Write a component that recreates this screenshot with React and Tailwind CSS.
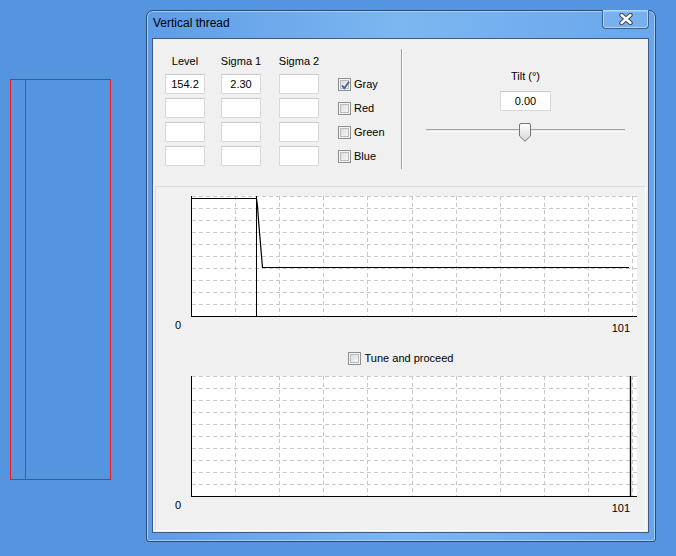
import React from "react";

const font = { fontFamily: '"Liberation Sans", Arial, sans-serif' };

const Edit = ({ value, className = "" }) => (
  <div
    className={`h-[20px] bg-white border border-[#d9d9d9] border-t-[#c9c9c9] flex items-center justify-center text-[11px] leading-none text-black ${className}`}
  >
    {value}
  </div>
);

const CheckBox = ({ checked }) => (
  <div className="w-[13px] h-[13px] border border-[#8e8f8f] bg-[#f4f4f4] p-[1px] shrink-0">
    <div className="relative w-full h-full border border-[#b9bcc0] bg-gradient-to-br from-[#dcdcdc] to-[#f6f6f6]">
      {checked && (
        <svg className="absolute -left-[1px] -top-[1px]" width="11" height="11" viewBox="0 0 11 11">
          <path d="M2 5.5 L4.3 8.2 L9 1.8" fill="none" stroke="#4a5f9c" strokeWidth="1.8" />
        </svg>
      )}
    </div>
  </div>
);

const CheckRow = ({ label, checked }) => (
  <div className="h-[20px] mb-[4px] flex items-center pt-[1px] gap-[3px] text-[11px] text-black">
    <CheckBox checked={checked} />
    <span>{label}</span>
  </div>
);

const Column = ({ label, values, className = "" }) => (
  <div className={`w-[40px] flex flex-col ${className}`}>
    <div className="h-[19px] flex justify-center text-[11px] leading-[13px] whitespace-nowrap text-black">
      {label}
    </div>
    {values.map((v, i) => (
      <Edit key={i} value={v} className="mb-[4px]" />
    ))}
  </div>
);

const Plot = ({ children }) => {
  const vx = Array.from({ length: 10 }, (_, k) => Math.round(44.1 * (k + 1)) + 0.5);
  const hy = Array.from({ length: 10 }, (_, k) => k * 12 + 0.5);
  return (
    <svg width="446" height="121" viewBox="0 0 446 121" className="block">
      <rect x="0" y="0" width="446" height="121" fill="#ffffff" />
      {hy.map((y) => (
        <line key={"h" + y} x1="1" y1={y} x2="446" y2={y} stroke="#c8c8c8" strokeWidth="1" strokeDasharray="4 3" />
      ))}
      {vx.map((x) => (
        <line key={"v" + x} x1={x} y1="0" x2={x} y2="120" stroke="#c8c8c8" strokeWidth="1" strokeDasharray="4 3" />
      ))}
      <line x1="0.5" y1="0" x2="0.5" y2="121" stroke="#000" strokeWidth="1" />
      <line x1="0" y1="120.5" x2="446" y2="120.5" stroke="#000" strokeWidth="1" />
      {children}
    </svg>
  );
};

const AxisLabels = () => (
  <div className="mt-[2px] h-[16px] flex justify-between pl-[19px] pr-[15px] text-[11px] leading-[13px] text-black">
    <span>0</span>
    <span className="pt-[3px]">101</span>
  </div>
);

const Slider = () => (
  <div className="mt-[12px] w-[199px] h-[19px] relative">
    <div className="absolute left-0 right-0 top-[6px] h-[3px] border-t border-[#a7a7a7] border-b border-b-white bg-[#e4e4e4]" />
    <svg className="absolute left-[93px] top-0" width="12" height="19" viewBox="0 0 12 19">
      <defs>
        <linearGradient id="thumb" x1="0" y1="0" x2="0" y2="1">
          <stop offset="0" stopColor="#ffffff" />
          <stop offset="1" stopColor="#d6d6d6" />
        </linearGradient>
      </defs>
      <path d="M2 0.5 H10 Q11.5 0.5 11.5 2 V13 L6 18.3 L0.5 13 V2 Q0.5 0.5 2 0.5 Z" fill="url(#thumb)" stroke="#767676" strokeWidth="1" />
    </svg>
  </div>
);

const CloseGlyph = () => (
  <svg width="16" height="12" viewBox="0 0 16 12">
    <path d="M3.5 2 L12.5 10 M12.5 2 L3.5 10" stroke="#3b4656" strokeWidth="4.4" strokeLinecap="round" />
    <path d="M3.5 2 L12.5 10 M12.5 2 L3.5 10" stroke="#ffffff" strokeWidth="2.4" strokeLinecap="round" />
  </svg>
);

export default function App() {
  return (
    <div className="relative w-[676px] h-[556px] overflow-hidden bg-[#5494e0]" style={font}>
      {/* red rectangle on the desktop */}
      <div className="absolute left-[10px] top-[79px] w-[101px] h-[401px] border border-[#f01818] flex">
        <div className="w-[15px] h-full border-r border-[#c8283c]" />
      </div>

      {/* window */}
      <div className="absolute left-[146px] top-[10px] w-[510px] h-[532px] border border-[#2e4b72] rounded-t-[7px] rounded-b-[3px] bg-gradient-to-r from-[#5f9ce6] via-[#7cb7f1] to-[#69a6ec] shadow-[inset_0_0_0_1px_#a6cdf6] flex flex-col">
        <div className="h-[27px] flex shrink-0">
          <div className="pl-[6px] pt-[5px] text-[12px] leading-[15px] text-black">Vertical thread</div>
          <div className="ml-auto mr-[6px] -mt-[1px] w-[47px] h-[19px] border border-[#3f5f88] border-t-0 rounded-b-[4px] bg-[#8dbef2]/40 shadow-[inset_0_0_0_1px_#b2d4f7] flex items-center justify-center">
            <CloseGlyph />
          </div>
        </div>

        {/* client area */}
        <div className="ml-[5px] w-[497px] h-[495px] border border-[#3f5a7e] bg-[#f0f0f0] flex flex-col">
          {/* controls */}
          <div className="h-[147px] flex shrink-0">
            <div className="w-[248px] pl-[12px] pt-[16px] flex">
              <Column label="Level" values={["154.2", "", "", ""]} />
              <Column label="Sigma 1" values={["2.30", "", "", ""]} className="ml-[16px]" />
              <Column label="Sigma 2" values={["", "", "", ""]} className="ml-[18px]" />
              <div className="ml-[19px] pt-[19px] flex flex-col">
                <CheckRow label="Gray" checked />
                <CheckRow label="Red" />
                <CheckRow label="Green" />
                <CheckRow label="Blue" />
              </div>
            </div>
            <div className="mt-[10px] h-[120px] w-[2px] border-l border-[#a0a0a0] border-r border-r-white" />
            <div className="flex-1 flex flex-col items-center pt-[31px]">
              <div className="h-[13px] text-[11px] leading-[13px] text-black">Tilt (°)</div>
              <Edit value="0.00" className="mt-[8px] w-[51px]" />
              <Slider />
            </div>
          </div>

          {/* charts panel */}
          <div className="mx-[2px] h-[345px] border border-[#d8dde3] border-r-white border-b-white flex flex-col">
            <div className="mt-[9px] ml-[35px]">
              <Plot>
                <polyline
                  points="0,2.5 65.5,2.5 66.5,10 67.5,24 68.5,36 69.5,48 70.5,60 71.5,71.5 438,71.5"
                  fill="none"
                  stroke="#000"
                  strokeWidth="1.2"
                />
                <line x1="65.5" y1="0" x2="65.5" y2="121" stroke="#000" strokeWidth="1" />
              </Plot>
            </div>
            <AxisLabels />
            <div className="mt-[14px] h-[19px] flex items-center justify-center gap-[4px] text-[11px] text-black">
              <CheckBox />
              <span>Tune and proceed</span>
            </div>
            <div className="mt-[8px] ml-[35px]">
              <Plot>
                <line x1="439.5" y1="0" x2="439.5" y2="121" stroke="#000" strokeWidth="1.4" />
              </Plot>
            </div>
            <AxisLabels />
          </div>
        </div>
      </div>
    </div>
  );
}
